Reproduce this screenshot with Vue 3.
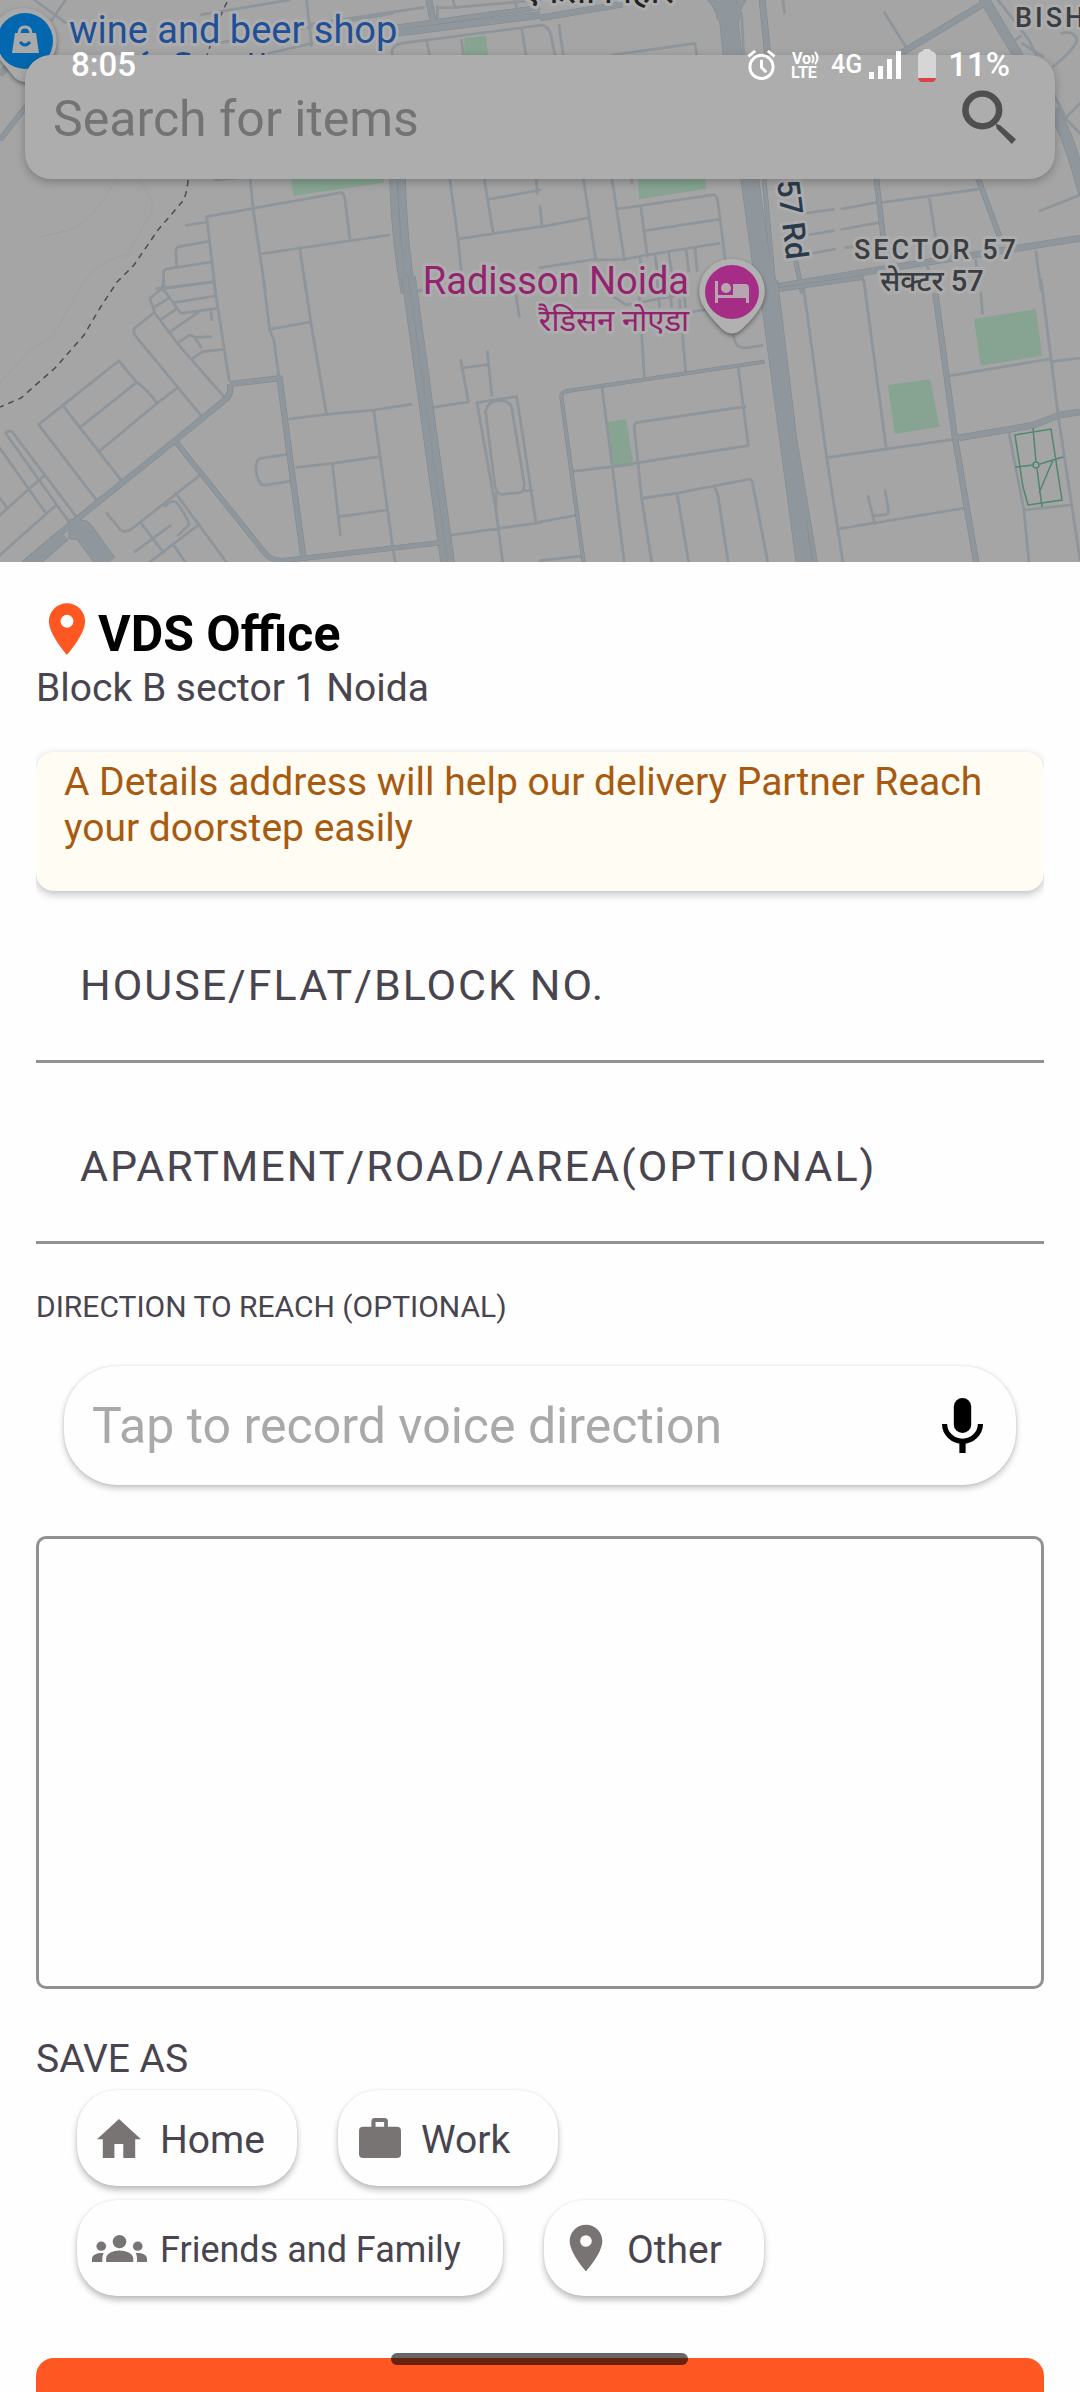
<script setup>
import { ref } from 'vue'

const house = ref('')
const apartment = ref('')
const voice = ref('')
const directions = ref('')

// The street map is drawn in four tiles that share one scale.
const tiles = [
  {
    id: 'nw',
    at: 'translate(0 0) scale(0.3444 0.3333)',
    parks: ['M1348 114L1411 107L1418 175H1350Z', 'M844 530H1114V548L852 587Z'],
    major: [
      { w: 22, d: 'M1140 100L1568 45' },
      { w: 16, d: 'M1140 84L1568 22' },
      { w: 20, d: 'M1245 0L1258 64' },
      { w: 16, d: 'M0 420L90 300' },
      { w: 18, d: 'M0 225L20 200' },
      { w: 24, d: 'M1142 530C1146 680 1158 780 1176 880' },
      { w: 24, d: 'M1166 530C1170 680 1180 780 1196 880' }
    ],
    minor: [
      'M585 44L840 0M890 0L905 138M1230 22L905 72M100 0L190 68M190 0L150 60M1000 65L1140 40',
      'M640 128L905 80M780 160L905 130M1140 170C1132 140 1150 132 1180 128L1568 76M1240 125L1248 170M1515 85L1528 170',
      'M1270 20V60M1316 0L1320 22L1272 24M1320 22L1568 0M1495 0L1500 20M1340 120L1346 170',
      'M625 540L690 534M726 530L735 628L770 870M600 650L990 578Q1000 580 1002 600L1016 718M540 676L602 666',
      'M600 650L625 870M606 724L520 740Q510 742 511 760L513 800M614 786L480 808Q473 812 475 830L477 865L622 846M455 866L480 862',
      'M755 762L1130 705M870 743L888 870M1305 530L1330 717L1345 870M1405 530L1432 700M1420 598L1568 570M1330 717L1568 680M1556 530L1560 580'
    ]
  },
  {
    id: 'ne',
    at: 'translate(540 0) scale(0.3444 0.3333)',
    parks: ['M284 530H480L483 566L288 598Z'],
    major: [
      { w: 20, d: 'M0 54L240 12' },
      { w: 56, d: 'M542 0L560 175' },
      { w: 22, d: 'M470 -30Q520 10 525 60M610 -30Q570 10 568 60' },
      { w: 20, d: 'M645 0L662 170' },
      { w: 20, d: 'M1290 10L1040 165' },
      { w: 30, d: 'M1280 -20L1390 170' },
      { w: 34, d: 'M1490 330C1530 400 1550 470 1580 580' },
      { w: 54, d: 'M608 530L655 880' },
      { w: 14, d: 'M650 530L680 870' },
      { w: 16, d: 'M976 530L1000 740' },
      { w: 16, d: 'M1270 530L1338 720' },
      { w: 14, d: 'M740 770L762 880' },
      { w: 20, d: 'M660 865L980 810L1568 715' }
    ],
    minor: [
      'M210 165L450 130L455 170M0 75Q22 75 30 100L45 170M55 75L68 170M585 40L592 170M705 0L710 38M1000 38L1065 145',
      'M1330 0L1420 120L1440 165M1375 125L1395 108M1515 100Q1550 90 1560 120Q1550 150 1490 200M1490 280L1530 360L1568 400M1520 360L1568 310M1400 130L1460 170',
      'M125 530L162 780M208 530L245 780M0 620L6 680L138 654M265 530L267 548M0 803L160 778',
      'M225 627L505 584Q515 588 517 610L538 780M293 622L312 770M300 693L518 658M160 780L245 778L310 765L520 730',
      'M290 770L296 810M334 765L340 812M374 760L382 815M424 750L432 812M450 745L456 812',
      'M770 640L852 628M876 627L975 608M778 705L852 692M876 688L985 668M790 760L855 748M888 743L930 738M995 607L1270 568M1130 590L1150 720M1452 632L1568 585M1440 755L1455 870M1265 780L1270 810M1125 800L1135 830M938 840L945 870'
    ]
  },
  {
    id: 'sw',
    at: 'translate(0 280) scale(0.3444 0.3333)',
    parks: [],
    major: [
      { w: 18, d: 'M668 312L812 295L835 480L882 840' },
      { w: 18, d: 'M668 312Q672 345 655 358L510 480L230 712L70 850' },
      { w: 16, d: 'M510 485L770 820Q785 840 820 842L1280 788' },
      { w: 22, d: 'M1176 -10L1290 850' },
      { w: 22, d: 'M1196 -10L1310 850' },
      { w: 60, d: 'M200 748L240 750L310 850' },
      { w: 40, d: 'M185 765L90 850' }
    ],
    minor: [
      'M475 0L472 25L622 5M472 25L435 55L450 100L515 190L650 350M472 25L525 100L630 85M505 68L625 48M465 120L515 85M450 80L490 55',
      'M445 100L390 145Q385 155 395 170L585 408M490 158L575 98M515 190L550 165L570 172L612 170M565 172L584 202M560 235L588 215L650 208M612 88L615 120M620 0L665 300',
      'M765 0L783 150L795 180L810 290M783 148L900 126M885 0L903 130L948 403M840 417L948 403L1085 390L1193 373M1085 390L1140 800L1148 850M862 562L965 550L1102 530M965 550L988 765M985 710L1125 690',
      'M830 524L755 535Q743 540 743 570Q748 610 765 616L845 603M1258 382L1360 366L1338 240M1340 264L1418 254M1415 215L1428 346M1210 35L1225 30M1498 45L1508 110',
      'M1385 368L1500 350L1520 480L1556 728M1385 368L1440 690L1460 850M1410 395Q1415 365 1445 362Q1480 360 1486 385L1522 610Q1524 630 1510 638L1455 643Q1440 640 1436 610L1410 395M1440 690L1440 640M1520 633L1545 630M1312 765L1568 728',
      'M112 434L345 242L395 305Q430 330 456 370M112 434L283 664M180 374L355 605M233 442L395 308M290 512L456 370L515 324',
      'M0 505L130 695M16 460Q20 450 35 455L220 708M16 460L200 725M0 655L22 685M0 705L130 585M0 825L160 678',
      'M310 700L350 750Q365 760 385 745L575 590M408 728L475 818M392 815L494 737M430 850L572 738M510 640L660 850M505 796L540 850M480 678Q505 655 515 670Q550 720 548 735L518 765'
    ]
  },
  {
    id: 'se',
    at: 'translate(540 280) scale(0.3444 0.3333)',
    parks: [
      'M1260 116L1440 88L1458 228L1280 257Z',
      'M1010 315L1133 298L1160 440L1030 461Z',
      'M196 426L250 418L272 558L210 565Z'
    ],
    major: [
      { w: 48, d: 'M656 -10L767 850' },
      { w: 14, d: 'M684 0L740 480L800 850' },
      { w: 18, d: 'M1148 40L1205 475L1267 850' },
      { w: 20, d: 'M1210 475L1430 436L1510 405L1568 396' },
      { w: 14, d: 'M684 30L940 -8' },
      { w: 12, d: 'M652 245L75 334Q62 338 62 350L127 850' }
    ],
    minor: [
      'M285 -10L303 292M405 60L423 275M340 0L347 80M375 0L382 80M415 0L422 80M440 95L480 90M200 40L250 75L430 40',
      'M765 20L832 530L880 850M940 0L1005 503M832 533L1200 478M865 747L1230 685M562 165Q565 205 595 204L645 196',
      'M1280 40L1285 100M1455 0L1505 410L1568 840M1192 287L1480 237M1485 245L1568 234M1362 460L1405 690L1420 850M1405 690L1540 675',
      'M180 322L210 560L245 850M95 574L210 560L605 497L575 258M595 380L280 428Q272 432 274 445L295 655L325 850M295 655L395 640L505 618L610 597Q616 600 618 615L662 850M398 640L432 850M505 618Q518 640 520 670L547 850',
      'M0 726L105 706M0 842L122 828M952 648L972 732M968 708L1005 704Q1013 700 1012 690L1002 632'
    ]
  }
]
</script>

<template>
  <main class="screen">
    <section class="hero">
      <svg class="map" viewBox="0 0 1080 562" role="img" aria-label="Map of Noida">
        <rect width="1080" height="562" fill="#a5a5a5" />
        <g v-for="tile in tiles" :key="tile.id" :transform="tile.at" fill="none" stroke-linejoin="round">
          <path v-for="d in tile.parks" :key="d" :d="d" fill="#86a491" />
          <path v-for="d in tile.minor" :key="d" :d="d" stroke="#8e959b" stroke-width="8" stroke-linecap="round" />
          <path v-for="r in tile.major" :key="r.d" :d="r.d" stroke="#7f898f" :stroke-width="r.w" />
          <path v-for="r in tile.major" :key="r.d + 'f'" :d="r.d" stroke="#90979c" :stroke-width="r.w - 3" />
        </g>
        <path d="M227 2L220 17L207 55M188 180Q187 195 182 202L158 230L134 265L117 282L100 308L84 335L55 368L21 398L0 407" fill="none" stroke="#4d4d4d" stroke-width="1.500" stroke-dasharray="6 5" />
        <path d="M117 178Q90 225 69 230L40 237M138 178Q158 205 150 215L127 255Q95 260 79 290L52 337L30 350L0 383" fill="none" stroke="#9f9f9f" stroke-width="1" />
        <g fill="none" stroke="#4f8770" stroke-width="1.500">
          <path d="M1015 435L1051 429L1062 500L1028 505L1023 487ZM1033 428L1036 462M1037 469L1042 507M1015 467L1033 465M1040 464L1063 457M1053 460L1039 493" />
          <circle cx="1036" cy="465" r="3" />
        </g>
        <path d="M143 55L148 52M177 55Q183 52 190 55M251 55V53M263 55V53" stroke="#1f4f96" stroke-width="3" fill="none" />

        <path class="pin-body" d="M25 8A33 33 0 0 0 -8 50L15 78Q25 86 35 78L52 58A33 33 0 0 0 25 8Z" fill="#a9a9a9" />
        <circle cx="25" cy="41" r="28" fill="#0367af" />
        <path d="M15 33H36L39 53H12Z" fill="#a9a9a9" />
        <path d="M19 34Q19 27 25 27Q31 27 31 34" fill="none" stroke="#a9a9a9" stroke-width="3" />
        <path d="M20 42Q25 48 30 42" fill="none" stroke="#0367af" stroke-width="3" />

        <path class="pin-body" d="M732 259A32 32 0 0 0 702 304Q708 315 722 329Q732 338 742 329Q757 315 762 304A32 32 0 0 0 732 259Z" fill="#b1b1b1" />
        <circle cx="732" cy="292" r="27" fill="#a52d85" />
        <g fill="#b8a5b2">
          <path d="M715 281H718V295H733V284H745Q749 284 749 288V303H746V298H718V303H715Z" />
          <circle cx="726" cy="288" r="5" />
        </g>

        <g class="labels">
          <text class="shop" x="69" y="43">wine and beer shop</text>
          <text class="hotel" x="689" y="294" text-anchor="end">Radisson Noida</text>
          <text class="hotel hindi" x="689" y="331" text-anchor="end">रैडिसन नोएडा</text>
          <text class="area" x="854" y="259">SECTOR 57</text>
          <text class="area-hindi" x="932" y="291" text-anchor="middle">सेक्टर 57</text>
          <text class="area" x="1015" y="27">BISH</text>
          <text class="village" x="674" y="3" text-anchor="end">एकता विहार</text>
          <text class="road" transform="translate(777 181) rotate(83)">57 Rd</text>
        </g>
      </svg>

      <div class="status">
        <span class="clock">8:05</span>
        <div class="indicators">
          <svg width="29" height="30" viewBox="0 0 29 31" fill="none" stroke="#fff" stroke-width="3">
            <circle cx="14.500" cy="17.500" r="12" />
            <path d="M14.500 10V18L19.500 23M1 6.500L8 1M28 6.500L21 1" />
          </svg>
          <svg class="volte" width="27" height="28" viewBox="0 0 27 28">
            <text x="0" y="13">Vo</text>
            <text x="-1" y="27">LTE</text>
            <path d="M20 4Q23 8 20 12M23 1Q28 7 23 13" fill="none" stroke="#fff" stroke-width="2" />
          </svg>
          <span class="network">4G</span>
          <svg width="32" height="28" viewBox="0 0 32 28" fill="#fff">
            <path d="M0 21H5V28H0ZM9 15H14V28H9ZM18 8H23V28H18ZM27 0H32V28H27Z" />
          </svg>
          <svg class="battery" width="18" height="33" viewBox="0 0 18 33">
            <path d="M5 2Q5 0 7 0H11Q13 0 13 2Q18 3 18 7V29H0V7Q0 3 5 2Z" fill="#d6d6d6" />
            <path d="M0 29H18Q17 33 14 33H4Q1 33 0 29Z" fill="#d94545" />
          </svg>
          <span class="percent">11%</span>
        </div>
      </div>

      <form class="search" @submit.prevent>
        <input type="search" placeholder="Search for items" aria-label="Search for items" />
        <button type="submit" aria-label="Search">
          <svg width="54" height="54" viewBox="0 0 157 162" preserveAspectRatio="none" fill="none" stroke="#504e4e">
            <circle cx="59" cy="60" r="49" stroke-width="19" />
            <path d="M98 101L111 106L157 148L145 162L101 116Z" fill="#504e4e" stroke="none" />
          </svg>
        </button>
      </form>
    </section>

    <form class="sheet" @submit.prevent>
      <div class="place-row">
        <svg width="62" height="62" viewBox="0 0 24 24" fill="#ff5722">
          <path d="M12 2C8.130 2 5 5.130 5 9c0 5.250 7 13 7 13s7-7.750 7-13c0-3.870-3.130-7-7-7zm0 9.500a2.500 2.500 0 1 1 0-5 2.500 2.500 0 0 1 0 5z" />
        </svg>
        <h1>VDS Office</h1>
      </div>
      <p class="address">Block B sector 1 Noida</p>

      <p class="notice">A Details address will help our delivery Partner Reach your doorstep easily</p>

      <div class="fields">
        <input v-model="house" class="line-field" type="text" placeholder="HOUSE/FLAT/BLOCK NO." aria-label="House, flat or block number" />
        <input v-model="apartment" class="line-field" type="text" placeholder="APARTMENT/ROAD/AREA(OPTIONAL)" aria-label="Apartment, road or area" />
      </div>

      <label class="direction" for="directions">DIRECTION TO REACH (OPTIONAL)</label>
      <div class="voice">
        <input v-model="voice" type="text" placeholder="Tap to record voice direction" aria-label="Tap to record voice direction" />
        <button type="button" aria-label="Record">
          <svg width="41" height="55" viewBox="0 0 118 165" preserveAspectRatio="none">
            <rect x="34" y="0" width="50" height="105" rx="25" />
            <path d="M7.500 78a51.500 51.500 0 0 0 103 0" fill="none" stroke="#000" stroke-width="15" />
            <rect x="50" y="130" width="18" height="35" />
          </svg>
        </button>
      </div>
      <textarea id="directions" v-model="directions"></textarea>

      <h2>SAVE AS</h2>
      <div class="chips">
        <div class="chip-row">
          <button type="button" class="chip">
            <span class="icon">
              <svg width="44" height="39" viewBox="0 0 129 117" preserveAspectRatio="none"><path d="M64.500 0L129 61H112V117H77V75H51V117H17V61H0Z" /></svg>
            </span>
            <span class="name">Home</span>
          </button>
          <button type="button" class="chip">
            <span class="icon">
              <svg width="42" height="40" viewBox="0 0 122 119" preserveAspectRatio="none">
                <path fill-rule="evenodd" d="M46 0H74Q84 0 84 10V26H110Q122 26 122 38V107Q122 119 110 119H12Q0 119 0 107V38Q0 26 12 26H36V10Q36 0 46 0ZM48 12V26H73V12Z" />
              </svg>
            </span>
            <span class="name">Work</span>
          </button>
        </div>
        <div class="chip-row">
          <button type="button" class="chip wide">
            <span class="icon">
              <svg width="55" height="27" viewBox="0 0 160 82" preserveAspectRatio="none">
                <circle cx="80" cy="20" r="20" />
                <circle cx="27" cy="34" r="14" />
                <circle cx="133" cy="34" r="14" />
                <path d="M41 82V71C41 56 62 47 80 47S120 56 120 71V82ZM0 82V73C0 60 16 54 34 55Q30 62 30 70V82ZM160 82V73C160 60 146 54 127 55Q131 62 131 70V82Z" />
              </svg>
            </span>
            <span class="name small">Friends and Family</span>
          </button>
          <button type="button" class="chip">
            <span class="icon">
              <svg width="56" height="56" viewBox="0 0 24 24">
                <path d="M12 2C8.130 2 5 5.130 5 9c0 5.250 7 13 7 13s7-7.750 7-13c0-3.870-3.130-7-7-7zm0 9.500a2.500 2.500 0 1 1 0-5 2.500 2.500 0 0 1 0 5z" />
              </svg>
            </span>
            <span class="name">Other</span>
          </button>
        </div>
      </div>

      <button type="submit" class="save" aria-label="Save address"></button>
    </form>

    <div class="home-indicator"></div>
  </main>
</template>

<style>
body {
  background: #fefefe;
}
</style>

<style scoped>
.screen {
  position: relative;
  height: 100vh;
  overflow: hidden;
  background: #fefefe;
  color: #49454f;
  font-family: Roboto, "Noto Sans", sans-serif;
}
.screen * {
  box-sizing: border-box;
}
svg {
  display: block;
  flex: none;
}
input,
textarea,
button {
  margin: 0;
  padding: 0;
  border: 0;
  outline: 0;
  background: none;
  color: inherit;
  font-family: inherit;
  appearance: none;
}
input {
  min-width: 0;
}

/* map and floating search */
.hero {
  position: relative;
}
.map {
  width: 100%;
  height: auto;
}
.pin-body {
  filter: drop-shadow(0 2px 2px rgba(0, 0, 0, 0.4));
}
.labels text {
  paint-order: stroke;
  stroke: #adadad;
  stroke-width: 6px;
  stroke-linejoin: round;
}
.labels .shop {
  fill: #1f4f96;
  font-size: 38px;
}
.labels .hotel {
  fill: #93226f;
  font-size: 38px;
}
.labels .hindi {
  font-size: 31px;
}
.labels .area {
  fill: #3a3d41;
  font-size: 27px;
  font-weight: 500;
  letter-spacing: 3px;
}
.labels .area-hindi {
  fill: #3a3d41;
  font-size: 29px;
  font-weight: 500;
}
.labels .village {
  fill: #222;
  font-size: 34px;
  font-weight: 500;
}
.labels .road {
  fill: #2a3a4c;
  font-size: 31px;
  font-weight: 500;
}
.status {
  position: absolute;
  z-index: 2;
  top: 45px;
  left: 0;
  right: 0;
  display: flex;
  align-items: center;
  justify-content: space-between;
  height: 40px;
  padding: 0 70px 0 71px;
  color: #fff;
  font-size: 33px;
  font-weight: 500;
  line-height: 40px;
}
.indicators {
  display: flex;
  align-items: center;
}
.volte {
  margin: 0 12px 0 16px;
  overflow: visible;
}
.volte text {
  fill: #fff;
  font-size: 16px;
  font-weight: 700;
}
.network {
  margin-right: 7px;
  font-size: 25px;
}
.battery {
  margin: 0 12px 0 17px;
}
.search {
  position: absolute;
  top: 55px;
  left: 25px;
  right: 25px;
  display: flex;
  align-items: center;
  height: 124px;
  padding: 0 39px 0 28px;
  border-radius: 26px;
  background: #adadad;
  box-shadow: 0 3px 10px rgba(0, 0, 0, 0.25);
}
.search input {
  flex: 1;
  height: 100%;
  padding-top: 4px;
  font-size: 50px;
}
.search input::placeholder {
  color: #737373;
  opacity: 1;
}

/* address form */
.sheet {
  padding: 36px 36px 0;
}
.place-row {
  display: flex;
  align-items: flex-start;
}
h1 {
  margin: 5px 0 0;
  color: #000;
  font-size: 50px;
  font-weight: 700;
  line-height: 62px;
}
.address {
  margin: 0;
  font-size: 39px;
  line-height: 46px;
}
.notice {
  margin: 41px 0 0;
  padding: 7px 28px 40px;
  border-radius: 18px;
  background: #fffcf3;
  box-shadow: 0 3px 8px rgba(0, 0, 0, 0.25);
  clip-path: inset(-8px 0 -16px);
  color: #a75a10;
  font-size: 39px;
  line-height: 46px;
}
.fields {
  display: flex;
  flex-direction: column;
  gap: 28px;
  margin-top: 19px;
}
.line-field {
  width: 100%;
  height: 153px;
  padding: 0 44px;
  border-bottom: 3px solid #919191;
  font-size: 43px;
  letter-spacing: 2px;
}
.line-field::placeholder {
  color: #49454f;
  opacity: 1;
}
.direction {
  display: block;
  margin-top: 45px;
  font-size: 30px;
  line-height: 36px;
}
.voice {
  display: flex;
  align-items: center;
  height: 119px;
  margin: 41px 28px 0;
  padding: 0 33px 0 28px;
  border-radius: 54px;
  background: #fefefe;
  box-shadow: 0 3px 6px rgba(0, 0, 0, 0.24), 0 0 2px rgba(0, 0, 0, 0.12);
}
.voice input {
  flex: 1;
  height: 100%;
  font-size: 50px;
}
.voice input::placeholder {
  color: #a9a9a9;
  opacity: 1;
}
textarea {
  display: block;
  width: 100%;
  height: 453px;
  margin-top: 51px;
  padding: 28px;
  border: 3px solid #919191;
  border-radius: 10px;
  font-size: 39px;
  resize: none;
}
h2 {
  margin: 46px 0 0;
  font-size: 39px;
  font-weight: 400;
  line-height: 48px;
}
.chips {
  display: flex;
  flex-direction: column;
  gap: 14px;
  margin: 7px 0 0 41px;
}
.chip-row {
  display: flex;
  gap: 41px;
}
.chip {
  display: flex;
  align-items: center;
  gap: 13px;
  min-width: 220px;
  height: 96px;
  padding: 0 30px 0 14px;
  border-radius: 40px;
  background: #fefefe;
  box-shadow: 0 4px 6px rgba(0, 0, 0, 0.26), 0 0 2px rgba(0, 0, 0, 0.1);
  white-space: nowrap;
}
.wide {
  min-width: 426px;
}
.icon {
  display: flex;
  justify-content: center;
  width: 56px;
  fill: #787473;
}
.name {
  padding-top: 4px;
  font-size: 39px;
  line-height: 48px;
}
.small {
  font-size: 36px;
}
.save {
  display: block;
  width: 100%;
  height: 132px;
  margin-top: 62px;
  border-radius: 18px;
  background: #ff5722;
}
.home-indicator {
  position: absolute;
  left: 50%;
  bottom: 27px;
  width: 297px;
  height: 12px;
  margin-left: -149px;
  border-radius: 6px;
  background: rgba(0, 0, 0, 0.6);
}
</style>
